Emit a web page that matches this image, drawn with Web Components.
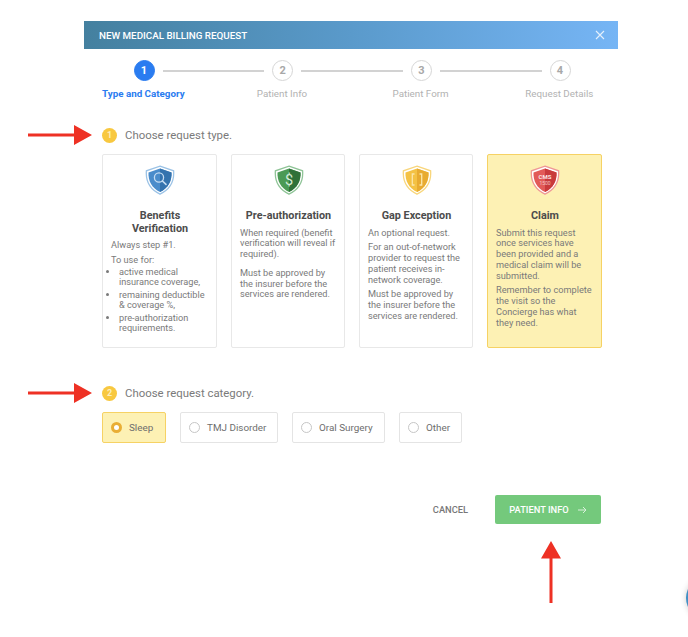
<!DOCTYPE html>
<html>
<head>
<meta charset="utf-8">
<title>New Medical Billing Request</title>
<style>
  html, body { margin: 0; background: #ffffff; }
  body { font-family: Roboto, "Liberation Sans", sans-serif; }
  type-card p { margin: 0 0 4px; }
  type-card p.far { margin-top: 8px; }
  type-card ul { margin: -2.5px 0 0; padding: 0 0 0 8px; line-height: 10px; }
  type-card li { margin-bottom: 3px; }
</style>
</head>
<body>
<billing-page>
  <billing-modal>
    <modal-header slot="header">NEW MEDICAL BILLING REQUEST</modal-header>
    <step-bar slot="steps" steps="Type and Category|Patient Info|Patient Form|Request Details" current="1"></step-bar>

    <form-section slot="first" number="1" label="Choose request type.">
      <card-row>
        <type-card icon="search" heading="Benefits Verification">
          <p>Always step #1.</p>
          <p>To use for:</p>
          <ul>
            <li>active medical insurance coverage,</li>
            <li>remaining deductible &amp; coverage %,</li>
            <li>pre-authorization requirements.</li>
          </ul>
        </type-card>
        <type-card icon="dollar" heading="Pre-authorization">
          <p>When required (benefit verification will reveal if required).</p>
          <p class="far">Must be approved by the insurer before the services are rendered.</p>
        </type-card>
        <type-card icon="gap" heading="Gap Exception">
          <p>An optional request.</p>
          <p>For an out-of-network provider to request the patient receives in-network coverage.</p>
          <p>Must be approved by the insurer before the services are rendered.</p>
        </type-card>
        <type-card icon="cms" heading="Claim" selected>
          <p>Submit this request once services have been provided and a medical claim will be submitted.</p>
          <p>Remember to complete the visit so the Concierge has what they need.</p>
        </type-card>
      </card-row>
    </form-section>

    <form-section slot="second" number="2" label="Choose request category.">
      <option-row>
        <category-option selected style="width:64px">Sleep</category-option>
        <category-option style="width:98px">TMJ Disorder</category-option>
        <category-option style="width:93px">Oral Surgery</category-option>
        <category-option style="width:63px">Other</category-option>
      </option-row>
    </form-section>

    <modal-footer slot="footer" cancel="CANCEL" next="PATIENT INFO"></modal-footer>
  </billing-modal>

  <red-arrow style="left:28px;top:123px"></red-arrow>
  <red-arrow style="left:28px;top:381px"></red-arrow>
  <red-arrow up style="left:541px;top:541px"></red-arrow>
  <chat-bubble></chat-bubble>
</billing-page>

<script>
const COLORS = {
  search: { light: '#4a8ccb', dark: '#3473ae', rim: '#9cc3e6', mark: '#c4dcf2' },
  dollar: { light: '#4b9a55', dark: '#2f7139', rim: '#8fc497', mark: '#d5ecd8' },
  gap:    { light: '#f4c244', dark: '#e8ab30', rim: '#f8d67c', mark: '#fbe6a8' },
  cms:    { light: '#e25a58', dark: '#c93a3c', rim: '#ef9896', mark: '#fbe3e2' }
};

const MARKS = {
  search: c => `<circle cx="14" cy="12.5" r="4.6" fill="none" stroke="${c}" stroke-width="1.3"/>
                <path d="M17.4 16l3.6 3.4" fill="none" stroke="${c}" stroke-width="1.6" stroke-linecap="round"/>`,
  dollar: c => `<text x="15" y="20" text-anchor="middle" font-size="14.5" font-family="Roboto, sans-serif" fill="${c}">$</text>`,
  gap: c => `<path d="M12.5 9h-2.2v11h2.2M17.5 9h2.2v11h-2.2" fill="none" stroke="${c}" stroke-width="1.3"/>`,
  cms: c => `<text x="15" y="13.5" text-anchor="middle" font-size="6" font-weight="700" font-family="Roboto, sans-serif" fill="${c}">CMS</text>
             <text x="15" y="19.5" text-anchor="middle" font-size="5" font-family="Roboto, sans-serif" fill="${c}" opacity="0.75">1500</text>`
};

const shieldSvg = name => {
  const c = COLORS[name];
  return `<svg width="30" height="30" viewBox="0 0 30 30" aria-hidden="true">
    <path d="M15 1.2 L28.6 5.8 C29.4 16 24.6 24.6 15 29.2 C5.4 24.6 .6 16 1.4 5.8 Z" fill="#fff" stroke="${c.rim}" stroke-width="1.3"/>
    <path d="M15 3.6 L26.5 7.4 C27 15.8 23 23.2 15 27 C7 23.2 3 15.8 3.5 7.4 Z" fill="${c.light}"/>
    <path d="M15 3.6 L26.5 7.4 C27 15.8 23 23.2 15 27 Z" fill="${c.dark}"/>
    ${MARKS[name](c.mark)}
  </svg>`;
};

// Small helper so every element below gets its open shadow root the same way
const makeTemplate = html => {
  const t = document.createElement('template');
  t.innerHTML = html;
  return t;
};

class Base extends HTMLElement {
  constructor(template) {
    super();
    this._sR = this.attachShadow({ mode: 'open' });
    this._sR.appendChild(template.content.cloneNode(true));
  }
}

const templatePage = makeTemplate(`
  <style>
    :host {
      display: block;
      position: relative;
      width: 688px;
      height: 637px;
      overflow: hidden;
      background: #ffffff;
    }
  </style>
  <slot></slot>
`);
class BillingPage extends Base {
  constructor() { super(templatePage); }
}

const templateModal = makeTemplate(`
  <style>
    :host {
      display: block;
      width: 534px;
      margin-left: 84px;
      padding-top: 21px;
      color: #7a7a7a;
    }
    .body { padding: 0 16px 0 18px; }
    ::slotted([slot=steps]) { margin-top: 11px; }
    ::slotted([slot=first]) { margin-top: 27px; }
    ::slotted([slot=second]) { margin-top: 37px; }
    ::slotted([slot=footer]) { margin-top: 52px; }
  </style>
  <slot name="header"></slot>
  <slot name="steps"></slot>
  <div class="body">
    <slot name="first"></slot>
    <slot name="second"></slot>
    <slot name="footer"></slot>
  </div>
`);
class BillingModal extends Base {
  constructor() { super(templateModal); }
}

const templateHeader = makeTemplate(`
  <style>
    :host {
      display: flex;
      align-items: center;
      justify-content: space-between;
      height: 28px;
      padding: 0 13px 0 15px;
      background: linear-gradient(90deg, #44809f 0%, #5a9acb 50%, #76b5f5 100%);
      color: #ffffff;
      font-size: 9.8px;
      font-weight: 500;
    }
    svg { display: block; }
  </style>
  <span><slot></slot></span>
  <svg width="10" height="10" viewBox="0 0 10 10" aria-label="Close">
    <path d="M1 1l8 8M9 1l-8 8" stroke="#e4f0fc" stroke-width="1.1" fill="none"/>
  </svg>
`);
class ModalHeader extends Base {
  constructor() { super(templateHeader); }
}

const templateSteps = makeTemplate(`
  <style>
    :host { display: block; font-size: 9.8px; }
    .track {
      display: flex;
      align-items: center;
      padding: 0 47.5px 0 49.5px;
    }
    .circle {
      flex: none;
      box-sizing: border-box;
      width: 21px;
      height: 21px;
      border: 1.5px solid #d6d6d6;
      border-radius: 50%;
      display: flex;
      align-items: center;
      justify-content: center;
      color: #a8a8a8;
      font-weight: 700;
      font-size: 11px;
    }
    .circle.on {
      background: #2a7cf0;
      border-color: #2a7cf0;
      color: #ffffff;
    }
    .line {
      flex: 1;
      height: 2px;
      margin: 0 8px;
      background: #d2d2d2;
    }
    .labels {
      display: grid;
      grid-template-columns: repeat(4, 138.67px);
      margin: 6px 0 0 -10px;
      color: #b2b2b2;
      line-height: 13px;
      text-align: center;
    }
    .labels .on { color: #2a7cf0; font-weight: 700; }
  </style>
  <div class="track"></div>
  <div class="labels"></div>
`);
class StepBar extends Base {
  constructor() { super(templateSteps); }

  connectedCallback() {
    const steps = this.getAttribute('steps').split('|');
    const current = Number(this.getAttribute('current'));
    const track = this._sR.querySelector('.track');
    const labels = this._sR.querySelector('.labels');
    steps.forEach((label, i) => {
      const on = i + 1 === current ? ' on' : '';
      if (i > 0) track.insertAdjacentHTML('beforeend', '<div class="line"></div>');
      track.insertAdjacentHTML('beforeend', `<div class="circle${on}">${i + 1}</div>`);
      labels.insertAdjacentHTML('beforeend', `<div class="${on}">${label}</div>`);
    });
  }
}

const templateSection = makeTemplate(`
  <style>
    :host { display: block; }
    .title {
      display: flex;
      align-items: center;
      gap: 8px;
      height: 16px;
      margin-bottom: 11px;
      font-size: 11.4px;
      color: #7a7a7a;
    }
    .badge {
      width: 15px;
      height: 15px;
      border-radius: 50%;
      background: #f8c840;
      color: #fdeebc;
      font-size: 9px;
      font-weight: 700;
      display: flex;
      align-items: center;
      justify-content: center;
    }
  </style>
  <div class="title"><span class="badge"></span><span class="text"></span></div>
  <slot></slot>
`);
class FormSection extends Base {
  constructor() { super(templateSection); }

  connectedCallback() {
    this._sR.querySelector('.badge').textContent = this.getAttribute('number');
    this._sR.querySelector('.text').textContent = this.getAttribute('label');
  }
}

const templateCardRow = makeTemplate(`
  <style>
    :host {
      display: grid;
      grid-template-columns: 115px 114px 114px 115px;
      column-gap: 14px;
      height: 194px;
    }
  </style>
  <slot></slot>
`);
class CardRow extends Base {
  constructor() { super(templateCardRow); }
}

const templateCard = makeTemplate(`
  <style>
    :host {
      display: block;
      box-sizing: border-box;
      padding: 10px 7px 0 8px;
      border: 1.5px solid #e8e8e8;
      border-radius: 2px;
      background: #ffffff;
      color: #7a7a7a;
      font-size: 9.2px;
      line-height: 10.75px;
    }
    :host([selected]) {
      background: #fdf1b4;
      border-color: #f6d264;
    }
    .icon { display: flex; justify-content: center; height: 30px; }
    h3 {
      margin: 15px 0 5px;
      color: #4c4c4c;
      font-size: 10.8px;
      font-weight: 700;
      line-height: 12.5px;
      text-align: center;
    }
  </style>
  <div class="icon"></div>
  <h3></h3>
  <slot></slot>
`);
class TypeCard extends Base {
  constructor() { super(templateCard); }

  connectedCallback() {
    this._sR.querySelector('.icon').innerHTML = shieldSvg(this.getAttribute('icon'));
    this._sR.querySelector('h3').textContent = this.getAttribute('heading');
  }
}

const templateOptionRow = makeTemplate(`
  <style>
    :host { display: flex; gap: 14px; }
  </style>
  <slot></slot>
`);
class OptionRow extends Base {
  constructor() { super(templateOptionRow); }
}

const templateOption = makeTemplate(`
  <style>
    :host {
      display: flex;
      align-items: center;
      gap: 7px;
      box-sizing: border-box;
      height: 31px;
      padding-left: 8px;
      border: 1.5px solid #e4e4e4;
      border-radius: 2px;
      color: #6e6e6e;
      font-size: 9.9px;
    }
    :host([selected]) {
      background: #fdf1b4;
      border-color: #f6d264;
    }
    .radio {
      flex: none;
      box-sizing: border-box;
      width: 11px;
      height: 11px;
      border: 1px solid #c6c6c6;
      border-radius: 50%;
      background: #ffffff;
    }
    :host([selected]) .radio { border: 3px solid #e9ae35; }
  </style>
  <span class="radio"></span>
  <span><slot></slot></span>
`);
class CategoryOption extends Base {
  constructor() { super(templateOption); }
}

const templateFooter = makeTemplate(`
  <style>
    :host {
      display: flex;
      align-items: center;
      justify-content: flex-end;
      gap: 27px;
      padding-right: 1px;
      font-size: 9.3px;
      font-weight: 500;
    }
    .cancel { color: #777777; }
    .next {
      box-sizing: border-box;
      width: 106px;
      height: 29px;
      display: flex;
      align-items: center;
      justify-content: center;
      gap: 9px;
      background: #74c97c;
      border-radius: 2px;
      color: #ffffff;
    }
    svg { display: block; }
  </style>
  <span class="cancel"></span>
  <div class="next">
    <span class="next-label"></span>
    <svg width="9" height="8" viewBox="0 0 9 8" aria-hidden="true">
      <path d="M0 4h8M5 1l3 3-3 3" fill="none" stroke="#d8f0da" stroke-width="1"/>
    </svg>
  </div>
`);
class ModalFooter extends Base {
  constructor() { super(templateFooter); }

  connectedCallback() {
    this._sR.querySelector('.cancel').textContent = this.getAttribute('cancel');
    this._sR.querySelector('.next-label').textContent = this.getAttribute('next');
  }
}

// Annotations drawn over the screenshot, so these two sit out of the flow
const templateArrow = makeTemplate(`
  <style>
    :host { display: block; position: absolute; line-height: 0; }
  </style>
  <svg></svg>
`);
class RedArrow extends Base {
  constructor() { super(templateArrow); }

  connectedCallback() {
    const svg = this._sR.querySelector('svg');
    if (this.hasAttribute('up')) {
      svg.setAttribute('width', 20);
      svg.setAttribute('height', 62);
      svg.innerHTML = '<path d="M10 0L20 17.5H11.5V62H8.5V17.5H0Z" fill="#ee3124"/>';
    } else {
      svg.setAttribute('width', 64);
      svg.setAttribute('height', 24);
      svg.innerHTML = '<path d="M64 12L46 22V13.5H0V10.5H46V2Z" fill="#ee3124"/>';
    }
  }
}

const templateBubble = makeTemplate(`
  <style>
    :host {
      display: block;
      position: absolute;
      left: 686px;
      top: 577px;
      width: 42px;
      height: 42px;
      border-radius: 50%;
      background: #3f8fc4;
      box-shadow: 0 0 6px rgba(0,0,0,0.2);
    }
  </style>
`);
class ChatBubble extends Base {
  constructor() { super(templateBubble); }
}

window.customElements.define('billing-page', BillingPage);
window.customElements.define('billing-modal', BillingModal);
window.customElements.define('modal-header', ModalHeader);
window.customElements.define('step-bar', StepBar);
window.customElements.define('form-section', FormSection);
window.customElements.define('card-row', CardRow);
window.customElements.define('type-card', TypeCard);
window.customElements.define('option-row', OptionRow);
window.customElements.define('category-option', CategoryOption);
window.customElements.define('modal-footer', ModalFooter);
window.customElements.define('red-arrow', RedArrow);
window.customElements.define('chat-bubble', ChatBubble);
</script>
</body>
</html>
